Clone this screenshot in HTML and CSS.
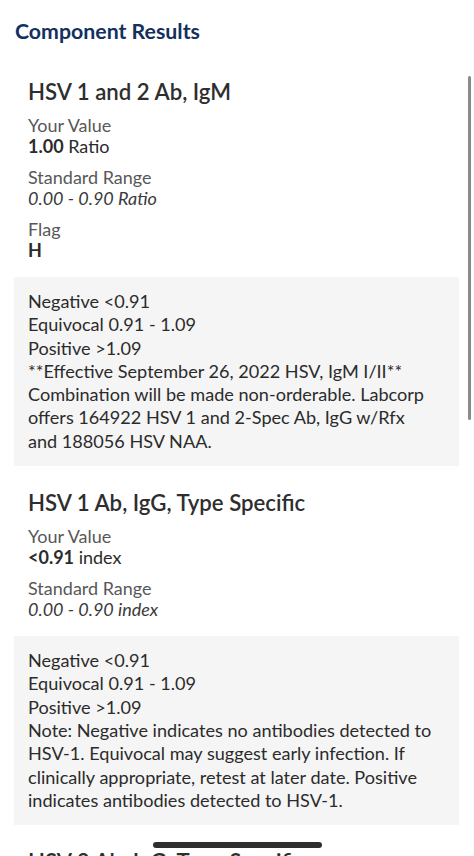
FILE: index.html
```html
<!DOCTYPE html>
<html lang="en">
<head>
    <meta charset="UTF-8">
    <title>Component Results</title>
    <link rel="stylesheet" href="styles.css">
</head>
<body>
    <h1 class="page-title">Component Results</h1>

    <div class="results">
        <section class="component">
            <div class="component-head">
                <h2>HSV 1 and 2 Ab, IgM</h2>
                <div class="field">
                    <div class="field-label">Your Value</div>
                    <div class="field-value"><strong>1.00</strong> Ratio</div>
                </div>
                <div class="field">
                    <div class="field-label">Standard Range</div>
                    <div class="field-value range">0.00 - 0.90 Ratio</div>
                </div>
                <div class="field">
                    <div class="field-label">Flag</div>
                    <div class="field-value"><strong>H</strong></div>
                </div>
            </div>
            <div class="note-box">
                Negative &lt;0.91<br>
                Equivocal 0.91 - 1.09<br>
                Positive &gt;1.09<br>
                **Effective September 26, 2022 HSV, IgM I/II**<br>
                Combination will be made non-orderable. Labcorp<br>
                offers 164922 HSV 1 and 2-Spec Ab, IgG w/Rfx<br>
                and 188056 HSV NAA.
            </div>
        </section>

        <section class="component">
            <div class="component-head">
                <h2>HSV 1 Ab, IgG, Type Specific</h2>
                <div class="field">
                    <div class="field-label">Your Value</div>
                    <div class="field-value"><strong>&lt;0.91</strong> index</div>
                </div>
                <div class="field">
                    <div class="field-label">Standard Range</div>
                    <div class="field-value range">0.00 - 0.90 index</div>
                </div>
            </div>
            <div class="note-box">
                Negative &lt;0.91<br>
                Equivocal 0.91 - 1.09<br>
                Positive &gt;1.09<br>
                Note: Negative indicates no antibodies detected to<br>
                HSV-1. Equivocal may suggest early infection. If<br>
                clinically appropriate, retest at later date. Positive<br>
                indicates antibodies detected to HSV-1.
            </div>
        </section>

        <section class="component">
            <div class="component-head">
                <h2>HSV 2 Ab, IgG, Type Specific</h2>
            </div>
        </section>
    </div>

    <!-- overlay bits from the phone screen -->
    <div class="scroll-thumb"></div>
    <div class="home-indicator"></div>
</body>
</html>
```

FILE: styles.css
```css
body {
    font-family: Lato, "Liberation Sans", sans-serif;
    background-color: #fff;
    color: #2b2b2b;
    margin: 0;
    padding: 0;
    height: 856px;
    overflow: hidden;
    position: relative;
}

.page-title {
    font-size: 21.3px;
    font-weight: 700;
    color: #14305e;
    line-height: 26px;
    margin: 0;
    padding: 18px 15px 0;
}

.results {
    padding: 33px 15px 0 14px;
}

.component {
    margin-bottom: 22px;
}

.component-head {
    padding: 0 14px;
}

.component h2 {
    font-size: 22.2px;
    font-weight: 600;
    color: #2e2e2e;
    line-height: 30px;
    margin: 0 0 8px;
}

.field {
    font-size: 18px;
    line-height: 21px;
    margin-bottom: 10px;
}

.field-label {
    color: #585858;
}

.field-value {
    color: #2b2b2b;
}

.field-value strong {
    font-weight: 700;
}

.range {
    font-style: italic;
    color: #3a3a3a;
}

.note-box {
    background-color: #f5f5f5;
    font-size: 18.1px;
    line-height: 23.3px;
    color: #2b2b2b;
    padding: 13px 14px;
    margin-top: 16px;
}

.scroll-thumb {
    position: absolute;
    top: 76px;
    left: 468px;
    width: 3px;
    height: 344px;
    border-radius: 2px;
    background-color: #8a8a8a;
}

.home-indicator {
    position: absolute;
    left: 153px;
    top: 842px;
    width: 169px;
    height: 6px;
    border-radius: 3px;
    background-color: #2e2e2e;
}
```
